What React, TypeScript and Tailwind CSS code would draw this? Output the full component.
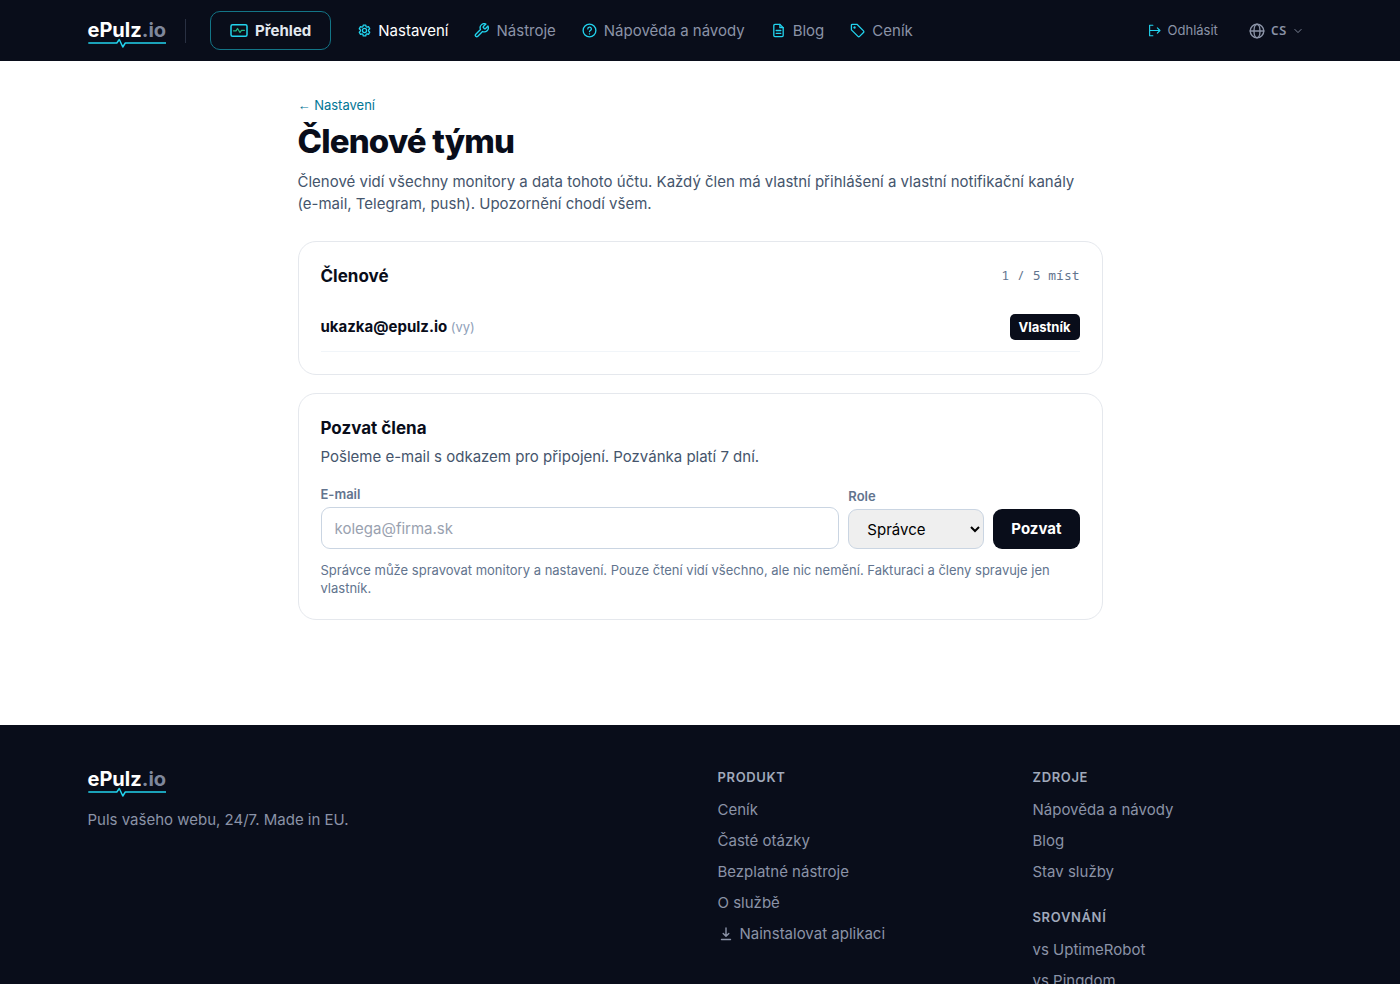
import type { ReactNode } from "react";

interface IconProps {
	className?: string;
	children: ReactNode;
}

interface NavItem {
	label: string;
	icon: ReactNode;
	active?: boolean;
}

interface FooterGroup {
	title: string;
	links: string[];
}

const Icon = ({ className = "size-[15px] text-[#22d3ee]", children }: IconProps) => (
	<svg
		className={`shrink-0 ${className}`}
		viewBox="0 0 16 16"
		fill="none"
		stroke="currentColor"
		strokeWidth="1.4"
		strokeLinecap="round"
		strokeLinejoin="round"
		aria-hidden="true"
	>
		{children}
	</svg>
);

const navItems: NavItem[] = [
	{
		label: "Nastavení",
		active: true,
		icon: (
			<svg
				className="size-[13px] shrink-0 text-[#22d3ee]"
				viewBox="0 0 24 24"
				fill="none"
				stroke="currentColor"
				strokeWidth="2.4"
				strokeLinejoin="round"
				aria-hidden="true"
			>
				<path d="M9.7 2h4.6l.6 3 1.6.9 2.9-1 2.3 4-2.3 2v2.2l2.3 2-2.3 4-2.9-1-1.6.9-.6 3H9.7l-.6-3-1.6-.9-2.9 1-2.3-4 2.3-2v-2.2l-2.3-2 2.3-4 2.9 1 1.6-.9z" />
				<circle cx="12" cy="12" r="3.8" />
			</svg>
		),
	},
	{
		label: "Nástroje",
		icon: (
			<svg
				className="size-[15px] shrink-0 text-[#22d3ee]"
				viewBox="1 1 22 22"
				fill="none"
				stroke="currentColor"
				strokeWidth="2"
				strokeLinecap="round"
				strokeLinejoin="round"
				aria-hidden="true"
			>
				<path d="M14.7 6.3a1 1 0 0 0 0 1.4l1.6 1.6a1 1 0 0 0 1.4 0l3.77-3.77a6 6 0 0 1-7.94 7.94l-6.91 6.91a2.12 2.12 0 0 1-3-3l6.91-6.91a6 6 0 0 1 7.94-7.94l-3.76 3.76z" />
			</svg>
		),
	},
	{
		label: "Nápověda a návody",
		icon: (
			<Icon>
				<circle cx="8" cy="8" r="6.8" />
				<path d="M6.2 6.3a1.9 1.9 0 1 1 2.7 1.7c-.6.3-.9.6-.9 1.2M8 11.5v.1" />
			</Icon>
		),
	},
	{
		label: "Blog",
		icon: (
			<Icon>
				<path d="M9.5 1.5H4.2A1.2 1.2 0 0 0 3 2.7v10.6a1.2 1.2 0 0 0 1.2 1.2h7.6a1.2 1.2 0 0 0 1.2-1.2V5z" />
				<path d="M9.5 1.5V5H13M5.5 8h5M5.5 11h5" />
			</Icon>
		),
	},
	{
		label: "Ceník",
		icon: (
			<Icon>
				<path d="M1.5 2.5v4.8l7 7a1.2 1.2 0 0 0 1.7 0l4.2-4.2a1.2 1.2 0 0 0 0-1.7l-7-7H2.5a1 1 0 0 0-1 1z" />
				<circle cx="4.8" cy="4.8" r=".6" />
			</Icon>
		),
	},
];

const produkt: FooterGroup = {
	title: "Produkt",
	links: ["Ceník", "Časté otázky", "Bezplatné nástroje", "O službě"],
};

const zdroje: FooterGroup = {
	title: "Zdroje",
	links: ["Nápověda a návody", "Blog", "Stav služby"],
};

const srovnani: FooterGroup = {
	title: "Srovnání",
	links: ["vs UptimeRobot", "vs Pingdom"],
};

const Logo = () => (
	<a href="#" className="flex w-fit flex-col text-[20px] leading-6 font-bold text-white">
		<span>
			ePulz<span className="text-[#7f879b]">.io</span>
		</span>
		<svg
			className="-mt-1 h-2.5 w-full text-[#22d3ee]"
			viewBox="0 0 78 10"
			fill="none"
			stroke="currentColor"
			strokeWidth="1.5"
			strokeLinejoin="round"
			aria-hidden="true"
		>
			<path d="M0 5h28.5L31 1.5 34.5 9 37 5h41" />
		</svg>
	</a>
);

const Header = () => (
	<header className="bg-[#090d1a]">
		<div className="mx-auto flex h-[61px] max-w-[1225px] items-center">
			<div className="pt-1">
				<Logo />
			</div>
			<span className="ml-[19px] h-6 w-px bg-[#293042]" />
			<a
				href="#"
				className="ml-6 flex h-[39px] items-center gap-[7px] rounded-[10px] border border-[#137587] px-[19px] text-[15px] leading-6 font-bold text-slate-200"
			>
				<svg
					className="h-[13px] w-[18px] shrink-0"
					viewBox="0 0 18 13"
					fill="none"
					strokeLinecap="round"
					strokeLinejoin="round"
					aria-hidden="true"
				>
					<rect x="1" y=".8" width="16" height="11.4" rx="1.5" stroke="#22d3ee" strokeWidth="1.5" />
					<path d="M3.5 6.8H6l1.5-2.3 2.5 4 1.5-2.2h3" stroke="#22b585" strokeWidth="1.3" />
				</svg>
				Přehled
			</a>
			<nav className="ml-[27px] flex items-center gap-[26px] text-[15px] leading-6">
				{navItems.map(({ label, icon, active }) => (
					<a
						key={label}
						href="#"
						className={`flex items-center gap-[7px] ${active ? "text-white" : "text-[#8b93a7]"}`}
					>
						{icon}
						{label}
					</a>
				))}
			</nav>
			<a href="#" className="ml-auto flex items-center gap-[7px] text-[13px] text-[#8b93a7]">
				<Icon className="size-[13px] text-[#22d3ee]">
					<path d="M6 1.5H2v13h4M2 8h12.5M11.5 4.8L14.7 8l-3.2 3.2" />
				</Icon>
				Odhlásit
			</a>
			<button
				type="button"
				className="mr-2.5 ml-[31px] flex items-center gap-1.5 font-['Noto_Sans_Mono','DejaVu_Sans_Mono',monospace] text-[13px] font-semibold text-[#8b93a7]"
			>
				<Icon className="size-4">
					<circle cx="8" cy="8" r="6.8" />
					<ellipse cx="8" cy="8" rx="3" ry="6.8" />
					<path d="M1.2 8h13.6" />
				</Icon>
				CS
				<Icon className="size-2.5">
					<path d="M3 5.5l5 5 5-5" />
				</Icon>
			</button>
		</div>
	</header>
);

const FooterLinks = ({ group, children }: { group: FooterGroup; children?: ReactNode }) => (
	<div>
		<h3 className="text-[13px] leading-5 font-semibold tracking-wider text-[#a0a9ba] uppercase">
			{group.title}
		</h3>
		<ul className="mt-3 flex flex-col gap-[9px] text-[15px] leading-[22px] text-[#8b93a7]">
			{group.links.map((link) => (
				<li key={link}>
					<a href="#">{link}</a>
				</li>
			))}
			{children}
		</ul>
	</div>
);

const Footer = () => (
	<footer className="bg-[#090d1a] pt-[42px] pb-16">
		<div className="mx-auto grid max-w-[1225px] grid-cols-4 gap-x-[35px]">
			<div className="col-span-2">
				<Logo />
				<p className="mt-3 text-[15px] leading-[22px] text-[#8b93a7]">
					Puls vašeho webu, 24/7. Made in EU.
				</p>
			</div>
			<FooterLinks group={produkt}>
				<li>
					<button type="button" className="flex items-center gap-1.5">
						<Icon className="size-4">
							<path d="M8 2v8M5.2 7.5L8 10.3l2.8-2.8M3.5 13.5h9" />
						</Icon>
						Nainstalovat aplikaci
					</button>
				</li>
			</FooterLinks>
			<div className="flex flex-col gap-6">
				<FooterLinks group={zdroje} />
				<FooterLinks group={srovnani} />
			</div>
		</div>
	</footer>
);

const MembersCard = () => (
	<section className="mt-[26px] rounded-[18px] border border-[#e5e8ed] p-[22px]">
		<div className="flex items-center justify-between">
			<h2 className="text-[17px] leading-6 font-bold text-[#090d1a]">Členové</h2>
			<span className="font-['Noto_Sans_Mono','DejaVu_Sans_Mono',monospace] text-[13px] text-slate-500">
				1 / 5 míst
			</span>
		</div>
		<ul className="mt-[15px]">
			<li className="flex items-center justify-between border-b border-slate-100 py-[11px]">
				<span className="text-[15px] font-bold text-[#090d1a]">
					ukazka@epulz.io{" "}
					<span className="text-[13px] font-normal text-slate-400">(vy)</span>
				</span>
				<span className="rounded-[5px] bg-[#090d1a] px-[9px] py-1 text-[13px] leading-[18px] font-bold text-white">
					Vlastník
				</span>
			</li>
		</ul>
	</section>
);

const InviteCard = () => (
	<section className="mt-[18px] rounded-[18px] border border-[#e5e8ed] p-[22px]">
		<h2 className="text-[17px] leading-6 font-bold text-[#090d1a]">Pozvat člena</h2>
		<p className="mt-[5px] text-[15px] leading-6 text-slate-600">
			Pošleme e-mail s odkazem pro připojení. Pozvánka platí 7 dní.
		</p>
		<form className="mt-4 flex items-end gap-[9px]">
			<div className="flex grow flex-col gap-1">
				<label htmlFor="email" className="text-[13px] leading-[18px] font-semibold text-slate-500">
					E-mail
				</label>
				<input
					id="email"
					type="email"
					placeholder="kolega@firma.sk"
					className="h-[42px] w-full rounded-[9px] border border-slate-300 px-[13px] text-[15px] placeholder:text-gray-400"
				/>
			</div>
			<div className="flex flex-col gap-1">
				<label htmlFor="role" className="text-[13px] leading-[18px] font-semibold text-slate-500">
					Role
				</label>
				<select
					id="role"
					className="h-10 w-[136px] rounded-[9px] border border-slate-300 bg-[#efefef] pl-3.5 text-[15px] text-black"
				>
					<option>Správce</option>
					<option>Pouze čtení</option>
				</select>
			</div>
			<button
				type="button"
				className="h-10 rounded-[9px] bg-[#090d1a] px-[18px] text-[15px] leading-6 font-bold text-white"
			>
				Pozvat
			</button>
		</form>
		<p className="mt-3 text-[13px] leading-[18px] text-slate-500">
			Správce může spravovat monitory a nastavení. Pouze čtení vidí všechno, ale nic nemění.
			Fakturaci a členy spravuje jen vlastník.
		</p>
	</section>
);

export default function App() {
	return (
		<div className="bg-white font-['Inter',sans-serif]">
			<Header />
			<main className="mx-auto max-w-[805px] pt-[35px] pb-[105px]">
				<a href="#" className="block w-fit text-[13px] leading-[18px] text-cyan-700">
					<span className="font-['Liberation_Sans',sans-serif]">←</span> Nastavení
				</a>
				<h1 className="mt-1.5 text-[33px] leading-10 font-extrabold tracking-tight text-[#090d1a]">
					Členové týmu
				</h1>
				<p className="mt-2.5 text-[15px] leading-[22px] text-slate-600">
					Členové vidí všechny monitory a data tohoto účtu. Každý člen má vlastní přihlášení a vlastní
					notifikační kanály <span className="whitespace-nowrap">(e-mail,</span> Telegram, push).
					Upozornění chodí všem.
				</p>
				<MembersCard />
				<InviteCard />
			</main>
			<Footer />
		</div>
	);
}
